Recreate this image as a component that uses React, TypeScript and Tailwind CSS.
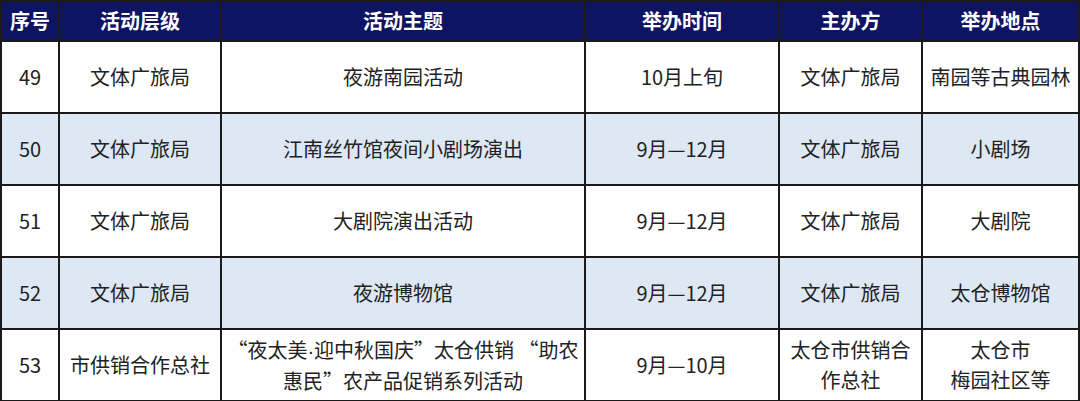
const COLUMNS = [
  { label: "序号", width: "w-[58px]" },
  { label: "活动层级", width: "w-[162px]" },
  { label: "活动主题", width: "w-[364px]" },
  { label: "举办时间", width: "w-[194px]" },
  { label: "主办方", width: "w-[143px]" },
  { label: "举办地点", width: "w-[157px]" },
];

const ROWS: React.ReactNode[][] = [
  ["49", "文体广旅局", "夜游南园活动", "10月上旬", "文体广旅局", "南园等古典园林"],
  ["50", "文体广旅局", "江南丝竹馆夜间小剧场演出", "9月—12月", "文体广旅局", "小剧场"],
  ["51", "文体广旅局", "大剧院演出活动", "9月—12月", "文体广旅局", "大剧院"],
  ["52", "文体广旅局", "夜游博物馆", "9月—12月", "文体广旅局", "太仓博物馆"],
  [
    "53",
    "市供销合作总社",
    <>
      “夜太美<span className="font-['Liberation_Sans',sans-serif]">·</span>迎中秋国庆”太仓供销 “助农
      <br />
      惠民”农产品促销系列活动
    </>,
    "9月—10月",
    "太仓市供销合\n作总社",
    "太仓市\n梅园社区等",
  ],
];

export default function App() {
  return (
    <div className="w-[1080px] h-[401px] bg-white font-['Noto_Sans_CJK_SC','Noto_Sans',sans-serif]">
      <table className="border-collapse table-fixed w-[1078px] text-[20px] text-[#222]">
        <thead>
          <tr className="h-[40px] bg-[#0e1462]">
            {COLUMNS.map((col) => (
              <th
                key={col.label}
                className={`${col.width} border-2 border-[#1a1a1a] text-white font-bold text-center leading-none p-0`}
              >
                {col.label}
              </th>
            ))}
          </tr>
        </thead>
        <tbody>
          {ROWS.map((row, i) => (
            <tr key={i} className={`h-[72px] ${i % 2 === 1 ? "bg-[#dde8f4]" : "bg-white"}`}>
              {row.map((cell, j) => (
                <td
                  key={j}
                  className="border-2 border-[#1a1a1a] text-center p-0 leading-[30px] whitespace-pre-line"
                >
                  {cell}
                </td>
              ))}
            </tr>
          ))}
        </tbody>
      </table>
    </div>
  );
}
